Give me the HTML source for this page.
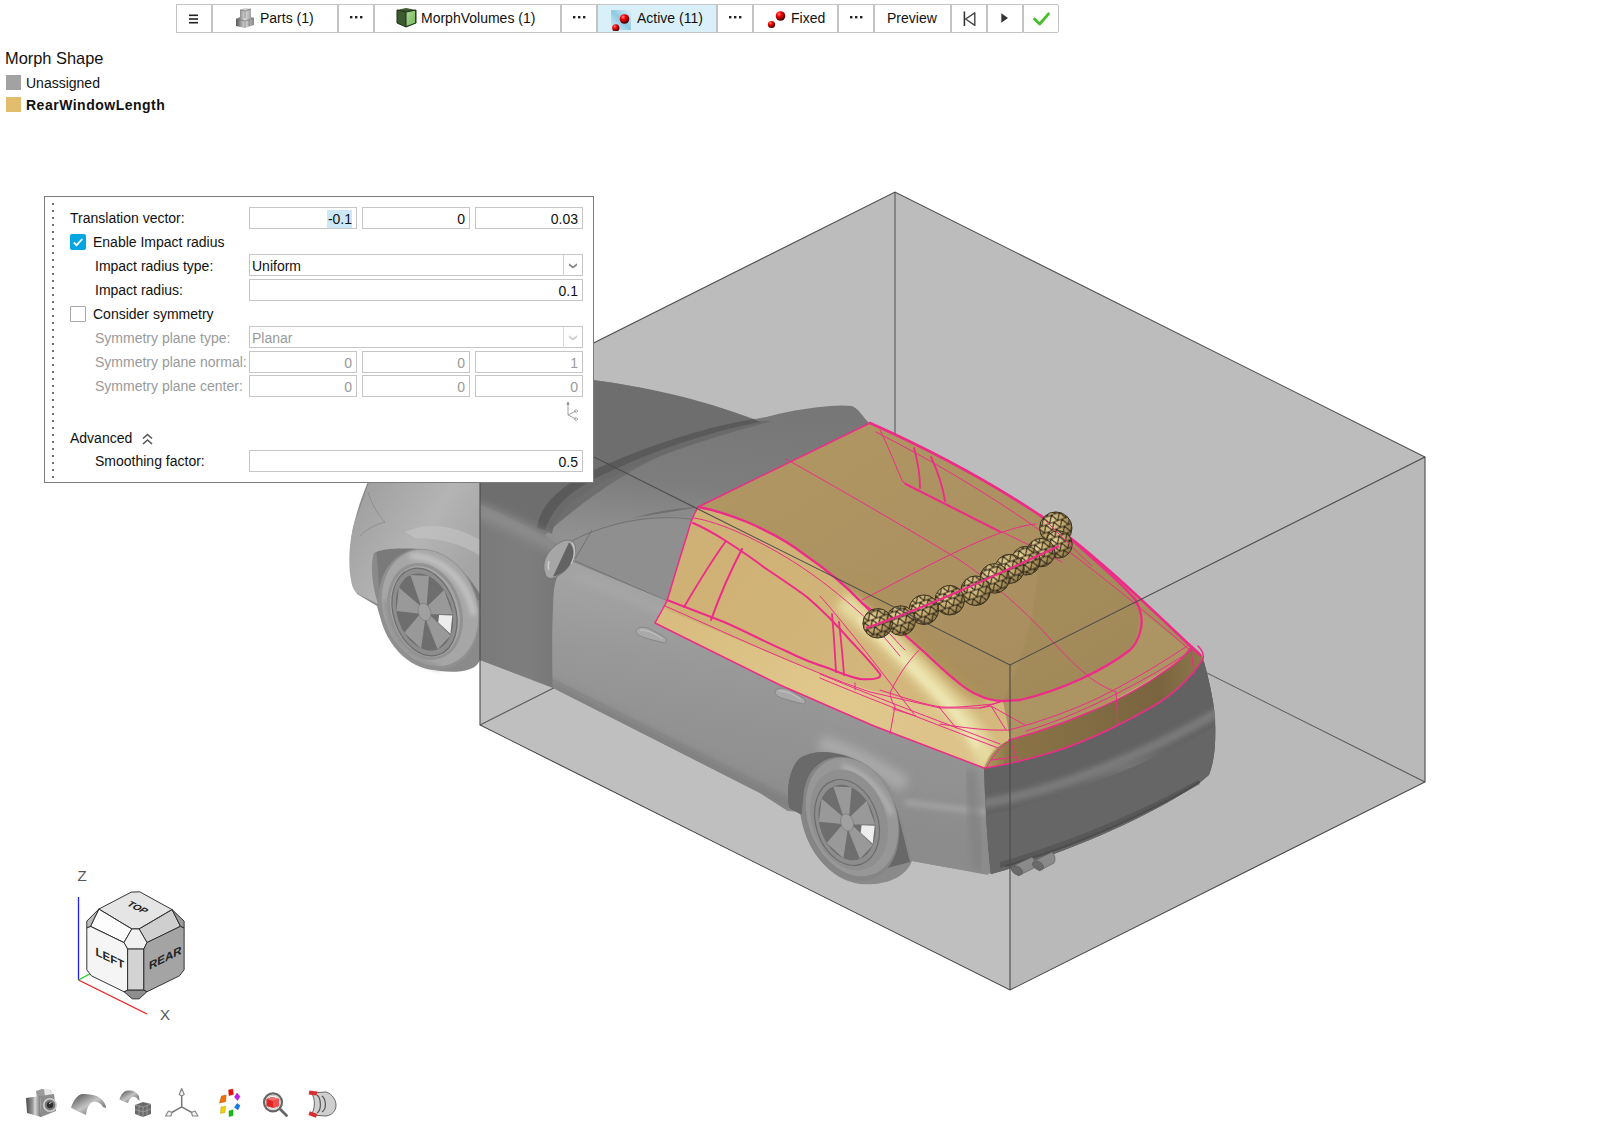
<!DOCTYPE html>
<html><head><meta charset="utf-8">
<style>
*{box-sizing:border-box}
html,body{margin:0;padding:0;background:#fff;width:1618px;height:1147px;overflow:hidden;font-family:"Liberation Sans",sans-serif;color:#000}
.abs{position:absolute}
#tb{position:absolute;left:176px;top:4px;height:29px;display:flex}
#tb .b{height:29px;border:1px solid #c4c4c4;margin-right:0;background:#fff;display:flex;align-items:center;justify-content:center;font-size:14px;color:#111;position:relative}
.dots{font-size:14px;font-weight:bold;letter-spacing:1px}
#dlg{position:absolute;left:44px;top:196px;width:550px;height:287px;background:#fff;border:1px solid #7c7c7c}
.lbl{position:absolute;font-size:14px;color:#111;white-space:nowrap}
.dis{color:#9a9a9a}
.fld{position:absolute;height:22px;border:1px solid #c6c6c6;background:#fff;font-size:14px;text-align:right;padding-right:4px;line-height:22px;color:#111}
.fld.dis{color:#9a9a9a}
</style></head><body>

<svg class="abs" style="left:0;top:0" width="1618" height="1147" id="scene">
<defs>
  <linearGradient id="gFender" x1="0" y1="0" x2="1" y2="0.6">
    <stop offset="0" stop-color="#9c9c9c"/><stop offset="0.6" stop-color="#b4b4b4"/><stop offset="1" stop-color="#a4a4a4"/>
  </linearGradient>
  <linearGradient id="gFenderIn" x1="0" y1="0" x2="1" y2="0">
    <stop offset="0" stop-color="#7a7a7a"/><stop offset="0.5" stop-color="#7e7e7e"/><stop offset="1" stop-color="#737373"/>
  </linearGradient>
  <linearGradient id="gDoor" gradientUnits="userSpaceOnUse" x1="720" y1="600" x2="690" y2="800">
    <stop offset="0" stop-color="#a3a3a3"/><stop offset="0.35" stop-color="#989898"/><stop offset="1" stop-color="#8c8c8c"/>
  </linearGradient>
  <linearGradient id="gRoofGold" x1="0" y1="0" x2="1" y2="1">
    <stop offset="0" stop-color="#b09762"/><stop offset="0.6" stop-color="#aa9060"/><stop offset="1" stop-color="#a48a58"/>
  </linearGradient>
  <linearGradient id="gSideGold" x1="0" y1="0" x2="1" y2="0.5">
    <stop offset="0" stop-color="#cdae72"/><stop offset="1" stop-color="#d6bb80"/>
  </linearGradient>
  <linearGradient id="gBelt" x1="0" y1="0" x2="1" y2="0.4">
    <stop offset="0" stop-color="#d8bb7e"/><stop offset="0.7" stop-color="#e0c88c"/><stop offset="1" stop-color="#ddc38a"/>
  </linearGradient>
  <linearGradient id="gBumper" x1="0" y1="0" x2="0" y2="1">
    <stop offset="0" stop-color="#5c5c5c"/><stop offset="0.42" stop-color="#646464"/><stop offset="0.5" stop-color="#747474"/><stop offset="0.58" stop-color="#686868"/><stop offset="1" stop-color="#555"/>
  </linearGradient>
  <linearGradient id="gRearPanel" x1="0" y1="0" x2="1" y2="0">
    <stop offset="0" stop-color="#b09a62"/><stop offset="0.12" stop-color="#8a7446"/><stop offset="0.8" stop-color="#7a6440"/><stop offset="1" stop-color="#8e784c"/>
  </linearGradient>
  <linearGradient id="gQuarter" gradientUnits="userSpaceOnUse" x1="720" y1="600" x2="690" y2="800">
    <stop offset="0" stop-color="#a3a3a3"/><stop offset="0.35" stop-color="#989898"/><stop offset="1" stop-color="#8c8c8c"/>
  </linearGradient>
  <linearGradient id="gHiStreak" x1="0" y1="0" x2="1" y2="0">
    <stop offset="0" stop-color="#d8bf80" stop-opacity="0"/><stop offset="0.5" stop-color="#ebe0a8"/><stop offset="1" stop-color="#d8bf80" stop-opacity="0"/>
  </linearGradient>
  <radialGradient id="gSph" cx="0.35" cy="0.35" r="0.7">
    <stop offset="0" stop-color="#ecd89e"/><stop offset="0.55" stop-color="#c0a66c"/><stop offset="1" stop-color="#8c7548"/>
  </radialGradient>
  <pattern id="mesh" width="8.5" height="7.4" patternUnits="userSpaceOnUse" patternTransform="rotate(-20)">
    <path d="M0,0 L8.5,0 M0,7.4 L8.5,7.4 M0,7.4 L4.25,0 L8.5,7.4" stroke="#342b1a" stroke-width="1.15" fill="none"/>
  </pattern>
  <linearGradient id="gHiStreak2" x1="0" y1="1" x2="1" y2="0">
    <stop offset="0" stop-color="#d6bb7c" stop-opacity="0"/><stop offset="0.45" stop-color="#e6d9a0"/><stop offset="0.6" stop-color="#e9dfa8"/><stop offset="1" stop-color="#c4a86c" stop-opacity="0.2"/>
  </linearGradient>
  <filter id="blur5" x="-50%" y="-50%" width="200%" height="200%"><feGaussianBlur stdDeviation="5"/></filter>
  <filter id="blur4" x="-50%" y="-50%" width="200%" height="200%"><feGaussianBlur stdDeviation="4"/></filter>
  <filter id="blur2" x="-50%" y="-50%" width="200%" height="200%"><feGaussianBlur stdDeviation="2.5"/></filter>
  <linearGradient id="gRoofGray" x1="0.6" y1="0" x2="0.4" y2="1">
    <stop offset="0" stop-color="#777"/><stop offset="0.55" stop-color="#7d7d7d"/><stop offset="1" stop-color="#939393"/>
  </linearGradient>
</defs>
  <!-- box faces -->
  <polygon points="480,400 895,192 1425,457 1425,782 1010,990 480,725" fill="#bcbcbc"/>
  <polygon points="480,400 1010,665 1010,990 480,725" fill="#bfbfbf"/>
  <polygon points="1010,665 1425,457 1425,782 1010,990" fill="#b9b9b9"/>
  <g stroke="#5a5a5a" stroke-width="1.1" fill="none">
    <polyline points="480,725 895,517 1425,782"/>
    <line x1="895" y1="192" x2="895" y2="517"/>
  </g>

  <g id="car">
    <!-- base silhouette -->
    <path fill="#8a8a8a" d="M593,380 C640,386 700,400 754,419 L778,415 C800,410 830,405 855,409 L869,423
      C930,450 1000,485 1041,516 C1090,552 1140,600 1200,655 L1204,662 C1212,690 1216,716 1215,745 C1214,765 1208,778 1198,784
      C1140,822 1060,855 991,874 L945,867 L912,861 C905,880 880,886 860,884 C830,880 805,850 800,812 L788,811 L760,793 L554,688 L480,660
      C476,672 455,673 440,671 C410,665 385,640 377,606 L357,594 C349,575 348,545 355,520 C360,500 366,488 372,470 L593,470 Z"/>
    <path fill="#7a7a7a" d="M376,545 C386,539 400,537 414,538 C440,540 470,555 480,575 L480,600 L380,600 Z"/>
    <!-- hood / windshield dark (top-left) -->
    <path fill="#6e6e6e" d="M369,482 L593,380 C640,386 700,398 755,420 L700,507 L620,520 L560,545 C530,530 505,515 480,505 L400,500 Z"/>
    <!-- roof gray band -->
    <path fill="url(#gRoofGray)" d="M545,535 C610,475 690,436 755,420 L778,414 C805,408 835,404 852,406 C860,410 862,416 869,423 L700,507 C670,508 630,515 590,535 L560,550 Z"/>
    <!-- crescent dark -->
    <path fill="#6a6a6a" d="M540,529 C546,505 565,486 600,472 C650,450 700,432 756,421 L772,421 C700,440 650,458 610,478 C575,496 556,512 552,534 Z"/>
    <path fill="#5a5a5a" d="M537,528 C540,505 560,485 598,468 C648,446 700,428 754,419 L760,422 C700,434 652,452 604,474 C570,490 552,508 545,530 Z"/>
    <!-- side window front -->
    <path fill="#8f8f8f" d="M566,544 C600,525 650,512 700,518 L690,540 L667,601 L570,561 Z"/>
    <path fill="none" stroke="#6a6a6a" stroke-width="0.8" d="M566,544 C600,525 650,512 697,520 M592,530 L575,559 M575,561 L667,601"/>

    <!-- front fender inside box (dark) -->
    <path fill="url(#gFenderIn)" d="M480,482 L480,505 C505,515 530,530 560,545 L574,548 L574,561 C562,566 556,575 554,590 C552,620 552,660 553,688 L480,660 Z"/>
    <clipPath id="clipFI"><path d="M480,482 L600,482 L574,548 L574,561 C562,566 556,575 554,590 C552,620 552,660 553,688 L480,660 Z"/></clipPath>
    <g clip-path="url(#clipFI)"><path fill="none" stroke="#8c8c8c" stroke-width="14" filter="url(#blur5)" d="M470,508 C500,518 530,532 565,552"/></g>
    <!-- front fender outside box -->
    <path fill="url(#gFender)" d="M369,482 C366,490 362,504 355,520 C349,540 348,565 351,580 C352,588 355,592 358,594 L378,604 C372,585 370,565 374,553 C380,549 395,548 410,548.5 C436,548 460,561 480,594 L480,482 Z"/>
    <path fill="#c6c6c6" opacity="0.55" d="M405,532 C430,520 460,528 480,540 L480,556 C465,545 440,538 415,538 Z"/>
    <path fill="none" stroke="#8a8a8a" stroke-width="0.8" d="M368,492 C372,505 378,515 385,522 C375,525 365,530 360,536"/>

    <!-- door -->
    <path fill="url(#gDoor)" d="M570,561 L667,601 L655,623 L780,685 L874,726 L984,767 L984,795 L930,861 L912,861 L905,830 C895,790 870,755 830,753 C805,753 790,770 789,790 L788,811 L760,793 L553,688 C552,660 552,620 554,590 C556,575 562,566 570,561 Z"/>
    <!-- sill -->
    <clipPath id="clipDoor"><path d="M570,561 L667,601 L655,623 L780,685 L874,726 L984,767 L984,795 L930,861 L912,861 L905,830 C895,790 870,755 830,753 C805,753 790,770 789,790 L788,811 L760,793 L553,688 C552,660 552,620 554,590 C556,575 562,566 570,561 Z"/></clipPath>
    <g clip-path="url(#clipDoor)">
      <path fill="none" stroke="#7c7c7c" stroke-width="9" filter="url(#blur4)" d="M548,684 L760,790 L800,810"/>
      <path fill="none" stroke="#a8a8a8" stroke-width="6" filter="url(#blur4)" d="M575,575 C620,592 660,608 700,630 C760,660 820,690 880,712"/>
    </g>
    <path fill="none" stroke="#858585" stroke-width="1.2" opacity="0.7" d="M553,680 L760,783 L789,798"/>
    <!-- door handles -->
    <g fill="#a9a9a9" stroke="#7a7a7a" stroke-width="0.7">
      <path d="M636,631 C637,627 643,626 650,629 L664,637 C667,639 667,643 664,643 L649,639 C642,637 636,635 636,631 Z"/>
      <path d="M775,692 C776,688 782,687 789,690 L803,698 C806,700 806,704 803,704 L788,700 C781,698 775,696 775,692 Z"/>
    </g>
    <path fill="none" stroke="#c4c4c4" stroke-width="1" d="M640,630 C648,630 656,634 662,639 M779,691 C787,691 795,695 801,700"/>
    <!-- rear quarter lower -->
    <path fill="url(#gQuarter)" d="M760,700 L874,726 L984,767 L988,875 L945,867 L912,861 C908,835 901,806 889,786 C876,768 856,755 830,752 L760,752 Z"/>
    <clipPath id="clipQ"><path d="M700,650 L984,767 L988,875 L912,861 C908,835 901,806 889,786 C876,768 856,755 830,752 C810,752 795,765 790,790 L700,745 Z"/></clipPath>
    <g clip-path="url(#clipQ)">
      <path fill="none" stroke="#a9a9a9" stroke-width="16" filter="url(#blur5)" d="M820,742 C850,752 880,768 905,785"/>
      <path fill="none" stroke="#a2a2a2" stroke-width="6" filter="url(#blur2)" d="M905,802 C930,806 960,809 986,812"/>
      <path fill="none" stroke="#808080" stroke-width="8" filter="url(#blur4)" d="M970,770 L978,870"/>
    </g>
    <!-- rear wheel arch dark -->
    <path fill="#686868" d="M789,808 C787,790 788,772 798,760 C808,752 820,752 832,753 C860,755 885,780 897,810 L910,862 L880,870 L800,814 Z"/>

    <!-- rear bumper / rear face -->
    <path fill="url(#gBumper)" d="M984,768 C1000,766 1018,762 1050,753 C1080,744 1115,728 1150,708 C1170,697 1188,682 1203,659 L1204,662 C1209,680 1213,698 1215,716 C1216,740 1215,760 1209,775 L1198,784 C1140,822 1060,855 991,874 C987,840 985,800 984,768 Z"/>
    <clipPath id="clipB"><path d="M984,768 C1000,766 1018,762 1050,753 C1080,744 1115,728 1150,708 C1170,697 1188,682 1203,659 L1204,662 C1209,680 1213,698 1215,716 C1216,740 1215,760 1209,775 L1198,784 C1140,822 1060,855 991,874 C987,840 985,800 984,768 Z"/></clipPath>
    <g clip-path="url(#clipB)">
      <path fill="#626262" d="M980,760 C1060,740 1150,700 1220,650 L1220,708 C1150,748 1060,790 980,800 Z"/>
      <path fill="none" stroke="#7a7a7a" stroke-width="9" filter="url(#blur2)" d="M982,804 C1060,790 1150,752 1222,710"/>
      <path fill="#666" d="M982,816 C1060,800 1150,764 1222,722 L1222,800 L982,900 Z"/>
      <path fill="none" stroke="#4c4c4c" stroke-width="2" d="M1005,866 C1080,845 1150,812 1200,782"/>
    </g>
    <path fill="#4f4f4f" d="M1000,862 C1070,842 1140,812 1198,780 L1200,784 C1140,818 1070,850 1000,868 Z" opacity="0.6"/>
    <!-- rear corner (side of bumper) -->
    
    <!-- exhaust -->
    <g stroke="#5a5a5a" stroke-width="0.6">
      <path fill="#8a8a8a" d="M1015,865 L1032,857 C1035,860 1036,864 1034,868 L1018,876 Z"/>
      <ellipse cx="1017" cy="870.5" rx="4" ry="6" transform="rotate(-60 1017 870.5)" fill="#6a6a6a"/>
      <path fill="#8a8a8a" d="M1036,860 L1052,852 C1055,855 1056,859 1054,863 L1039,871 Z"/>
      <ellipse cx="1038" cy="865.5" rx="4" ry="6" transform="rotate(-60 1038 865.5)" fill="#6a6a6a"/>
    </g>

    <!-- front tire -->
    <ellipse cx="429" cy="609.5" rx="49" ry="62" transform="rotate(-20 429 609.5)" fill="#909090"/>
    <ellipse cx="430" cy="608" rx="46.5" ry="59.5" transform="rotate(-20 430 608)" fill="#a6a6a6"/>
    <path fill="none" stroke="#c4c4c4" stroke-width="6" filter="url(#blur2)" d="M410,556 C440,556 466,578 474,615"/>
    <path fill="none" stroke="#8c8c8c" stroke-width="4" filter="url(#blur2)" d="M386,600 C388,635 405,660 440,668"/>
    <ellipse cx="425" cy="611.5" rx="35" ry="48" transform="rotate(-18 425 611.5)" fill="none" stroke="#929292" stroke-width="3"/>
    <ellipse cx="424.5" cy="612" rx="31" ry="45" transform="rotate(-18 424.5 612)" fill="#8d8d8d" stroke="#6c6c6c" stroke-width="1.2"/>
    <ellipse cx="424.5" cy="612" rx="27.3" ry="39.6" transform="rotate(-18 424.5 612)" fill="#6e6e6e"/>
    <path fill="#ededed" d="M439.1,614.9 L452.3,615.5 L450.4,633.8 L438.3,622.6 Z"/>
    <path fill="#999" d="M420.9,606.0 L410.5,575.0 L428.9,576.1 L426.6,606.4 Z"/>
    <path fill="#999" d="M426.9,606.7 L444.0,590.1 L452.8,614.3 L429.7,614.2 Z"/>
    <path fill="#999" d="M429.6,614.7 L450.6,635.4 L437.6,649.3 L425.6,619.0 Z"/>
    <path fill="#999" d="M425.2,619.0 L421.1,648.4 L404.3,632.8 L420.0,614.1 Z"/>
    <path fill="#999" d="M419.8,613.7 L396.4,611.1 L398.9,587.5 L420.6,606.3 Z"/>
    <ellipse cx="424.5" cy="612" rx="6.2" ry="9.0" transform="rotate(-18 424.5 612)" fill="#a0a0a0" stroke="#777" stroke-width="0.6"/>

    <!-- rear tire -->
    <ellipse cx="850" cy="819" rx="47" ry="64" transform="rotate(-20 850 819)" fill="#858585"/>
    <ellipse cx="852" cy="817" rx="44" ry="61" transform="rotate(-20 852 817)" fill="#979797"/>
    <path fill="none" stroke="#b2b2b2" stroke-width="5" filter="url(#blur2)" d="M842,766 C864,772 882,790 892,815"/>
    <ellipse cx="849" cy="820" rx="37" ry="52" transform="rotate(-20 849 820)" fill="#8f8f8f"/>
    <ellipse cx="847" cy="822.5" rx="31" ry="44" transform="rotate(-18 847 822.5)" fill="#8d8d8d" stroke="#6c6c6c" stroke-width="1.2"/>
    <ellipse cx="847" cy="822.5" rx="27.3" ry="38.7" transform="rotate(-18 847 822.5)" fill="#6e6e6e"/>
    <path fill="#ededed" d="M861.6,825.2 L874.7,825.8 L872.7,843.7 L860.7,832.8 Z"/>
    <path fill="#999" d="M843.4,816.7 L833.3,786.4 L851.6,787.3 L849.1,817.0 Z"/>
    <path fill="#999" d="M849.5,817.2 L866.6,800.9 L875.2,824.5 L852.2,824.6 Z"/>
    <path fill="#999" d="M852.1,825.1 L872.8,845.3 L859.9,859.0 L848.1,829.4 Z"/>
    <path fill="#999" d="M847.7,829.4 L843.4,858.2 L826.7,843.0 L842.5,824.6 Z"/>
    <path fill="#999" d="M842.3,824.1 L818.9,821.8 L821.6,798.7 L843.2,816.9 Z"/>
    <ellipse cx="847" cy="822.5" rx="6.2" ry="8.8" transform="rotate(-18 847 822.5)" fill="#a0a0a0" stroke="#777" stroke-width="0.6"/>
    <!-- rear arch crescent left -->
    <path fill="#6a6a6a" d="M789,808 C786,788 790,768 800,758 C810,752 822,751 834,753 C818,758 808,772 804,790 C803,800 802,808 802,814 Z"/>

    <!-- mirror -->
    <path fill="#a6a6a6" stroke="#6c6c6c" stroke-width="0.7" d="M545,573 C541,562 548,548 563,541 C572,538 577,543 575,552 C573,563 566,572 556,577 C550,580 546,578 545,573 Z"/>
    <path fill="#636363" d="M553,576.5 L569,542.5 C574,546 575,556 571,563 C566,571 559,576 553,576.5 Z"/>
    <path fill="none" stroke="#c8c8c8" stroke-width="1.2" d="M572,543 C576,548 575,557 571,564"/>
    <path fill="none" stroke="#d0d0d0" stroke-width="1.5" d="M549,561 C548,565 548,568 549,570"/>
    <!-- GOLD -->
    <!-- whole gold area (side colour) -->
    <path fill="url(#gSideGold)" d="M698,507 L870,423 C935,452 990,482 1041,516 C1090,550 1140,598 1200,655 C1204,655 1204,657 1203,659 C1188,682 1170,697 1150,708 C1115,728 1080,744 1050,753 C1018,762 1000,766 984,768 L874,726 L780,685 L655,623 L667,601 L679,561 L688,532 C690,524 694,514 698,507 Z"/>
    <!-- belt band (lighter) -->
    <path fill="url(#gBelt)" d="M662,608 C720,632 800,668 870,690 L940,708 C960,712 975,735 984,767 L874,726 L780,685 L655,623 Z"/>
    <!-- top: roof + rear window + trunk + deck -->
    <path fill="url(#gRoofGold)" d="M698,507 L870,423 C935,452 990,482 1041,516 C1090,550 1140,598 1200,655 C1196,650 1190,652 1185,655 C1165,671 1130,694 1080,716 C1058,725 1035,733 1010,740 C1008,725 1005,710 1003,701 C995,701 988,700 978,695 C970,692 962,686 954,679 C945,672 935,662 923,651 C914,643 905,635 891,623 C885,620 875,614 862,603 C848,588 830,572 805,555 C790,543 770,532 747,522 C730,515 715,510 698,507 Z"/>
    <!-- deck slightly lighter -->
    <path fill="#b29b69" opacity="0.55" d="M1003,701 L1020,700 C1063,690 1104,670 1130,650 C1142,638 1143,622 1141,612 C1165,630 1185,645 1200,655 C1196,650 1190,652 1185,655 C1165,671 1130,694 1080,716 C1058,725 1035,733 1010,740 C1008,725 1005,710 1003,701 Z"/>
    <!-- darker trunk interior toward right -->
    <path fill="#9c8352" opacity="0.35" d="M1040,515 C1080,545 1120,580 1132,596 C1140,605 1143,625 1130,650 C1104,670 1063,690 1020,700 L1003,701 C1030,640 1040,600 1040,515 Z"/>
    <!-- C pillar highlight -->
    <clipPath id="clipSide"><path d="M698,507 L870,423 L1010,736 C997,742 988,755 984,767 L874,726 L780,685 L655,623 Z"/></clipPath>
    <g clip-path="url(#clipSide)">
      <path fill="none" stroke="#b09458" stroke-width="14" opacity="0.6" filter="url(#blur4)" d="M858,585 C880,605 905,630 930,655 C950,675 965,690 985,700"/>
      <path fill="none" stroke="#e6dba2" stroke-width="20" filter="url(#blur5)" d="M842,600 C855,612 872,626 890,643 C912,664 935,688 955,710 C970,726 982,742 990,765"/>
      <path fill="none" stroke="#eee6b4" stroke-width="7" filter="url(#blur2)" d="M860,618 C880,636 900,655 922,677 C944,699 964,720 978,748"/>
    </g>
    <!-- rear panel (vertical) -->
    <path fill="url(#gRearPanel)" d="M984,768 C990,755 998,744 1010,740 C1035,733 1058,725 1080,716 C1105,706 1130,694 1150,681 C1165,671 1178,663 1185,655 L1192,646 C1198,650 1203,655 1203,659 C1188,682 1170,697 1150,708 C1115,728 1080,744 1050,753 C1018,762 1000,766 984,768 Z"/>
  </g>

  <!-- pink lines -->
  <g fill="none" stroke="#ee2b88" stroke-linejoin="round" stroke-linecap="round">
    <!-- outer boundary -->
    <path stroke-width="1.5" d="M698,507 L870,423"/>
    <path stroke-width="2.6" d="M870,423 C935,452 990,482 1041,516 C1090,550 1140,598 1200,655"/>
    <path stroke-width="1" d="M876,432 C935,462 995,498 1045,534 C1095,570 1150,615 1192,652"/>
    <path stroke-width="1.5" d="M698,507 C694,514 690,524 688,532 L679,561 L667,601 L655,623 L780,685 L874,726 L984,768 C1000,766 1018,762 1050,753 C1080,744 1115,728 1150,708 C1170,697 1188,682 1203,659 C1204,655 1202,650 1198,646"/>
    <!-- roof rail -->
    <path stroke-width="2.3" d="M698,507 C715,510 730,515 747,522 C770,532 790,543 805,555 C830,572 848,588 862,603 C875,614 885,620 891,623 C905,635 914,643 923,651 C935,662 945,672 954,679 C962,686 970,692 978,695 C988,700 995,701 1003,701 L1020,700 C1063,690 1104,670 1130,650 C1140,640 1143,625 1141,615 C1139,605 1135,598 1132,596 C1120,582 1100,565 1074,542 C1060,530 1050,522 1040,515"/>
    <path stroke-width="1" d="M694,518 C720,522 760,540 800,566 C830,586 850,604 868,620 C880,632 890,644 900,656"/>
    <!-- window top + quarter window -->
    <path stroke-width="2" d="M693,523 C705,528 715,534 726,541 C740,550 752,558 765,568 C780,578 795,588 807,597 C822,610 836,624 849,639 C860,651 872,663 880,674 C882,678 875,680 860,679"/>
    <!-- window lower edge -->
    <path stroke-width="2" d="M667,600 C690,609 708,616 724,622 C745,631 765,642 786,651 C800,658 815,664 828,668 C840,673 850,677 860,679"/>
    <path stroke-width="1" d="M665,606 C720,630 800,668 870,692 L940,708"/>
    <path stroke-width="1" d="M820,674 C870,695 930,718 1000,744 M820,678 C870,699 930,722 998,748"/>
    <!-- B pillars -->
    <path stroke-width="1.8" d="M726,541 C712,560 697,585 684,607"/>
    <path stroke-width="2" d="M742,549 C732,568 720,595 711,620"/>
    <!-- quarter window verticals -->
    <path stroke-width="1.8" d="M832,614 C834,635 835,655 836,672 M839,622 C841,640 843,660 844,675"/>
    <!-- C pillar lines -->
    <path stroke-width="1" d="M919,650 C905,665 897,678 890,693 C891,700 893,704 895,706 L890,734"/>
    <path stroke-width="1" d="M820,596 C850,630 880,670 914,714"/>
    <path stroke-width="1" d="M838,580 C870,610 890,635 905,650"/>
    <path stroke-width="1" d="M855,683 L855,690 M893,709 L916,716 M939,707 L956,728"/>
    <path stroke-width="1" d="M880,690 C905,698 925,705 942,707 C960,708 980,705 994,704 L1003,701"/>
    <!-- rear deck lines -->
    <path stroke-width="1" d="M940,708 L980,708 C988,706 995,703 1003,701"/>
    <path stroke-width="1" d="M980,708 L991,706 L1025,725 M991,706 L1006,730"/>
    <path stroke-width="1" d="M940,724 C960,727 985,731 1009,730 C1040,722 1080,708 1110,692 C1140,676 1165,661 1190,644"/>
    <path stroke-width="1" d="M1026,731 C1050,724 1080,712 1110,697 C1140,682 1165,668 1192,650"/>
    <path stroke-width="1.4" d="M1009,740 C1035,733 1058,725 1080,716 C1105,706 1130,694 1150,681 C1165,671 1178,663 1185,655 L1192,646"/>
    <path stroke-width="1" d="M1010,740 L1018,762 M1116,692 L1118,724 M1191,648 L1194,674"/>
    <path stroke-width="1" d="M991,760 L1015,757 M1005,759 L1006,765"/>
    <path stroke-width="1" d="M987,767 C992,757 1000,747 1010,740"/>
    <path stroke-width="1" d="M1051,640 C1065,655 1078,668 1088,676 C1098,684 1106,688 1116,692"/>
    <!-- top roof lines -->
    <path stroke-width="1" d="M786,459 C850,495 920,536 958,559 C990,580 1030,615 1051,640"/>
    <path stroke-width="1" d="M862,600 C920,570 960,548 1000,533 C1015,528 1025,525 1036,524"/>
    <path stroke-width="1" d="M880,430 C890,450 897,470 903,482 L1000,531 C1030,545 1050,556 1062,562"/>
    <path stroke-width="1.8" d="M914,448 C918,462 920,475 920,488 M931,457 C938,472 943,488 945,501"/>
    <path stroke-width="1.5" d="M905,484 L1000,532"/>
  </g>

  <!-- spheres -->
  <g id="spheres">
<circle cx="1055.8" cy="528.1" r="16.2" fill="url(#gSph)"/>
<circle cx="1055.8" cy="528.1" r="16.2" fill="url(#mesh)" stroke="#3b3220" stroke-width="1"/>
<circle cx="1058.5" cy="544.4" r="13.7" fill="url(#gSph)"/>
<circle cx="1058.5" cy="544.4" r="13.7" fill="url(#mesh)" stroke="#3b3220" stroke-width="1"/>
<circle cx="1040.8" cy="552.6" r="14.2" fill="url(#gSph)"/>
<circle cx="1040.8" cy="552.6" r="14.2" fill="url(#mesh)" stroke="#3b3220" stroke-width="1"/>
<circle cx="1025.9" cy="560.7" r="14.4" fill="url(#gSph)"/>
<circle cx="1025.9" cy="560.7" r="14.4" fill="url(#mesh)" stroke="#3b3220" stroke-width="1"/>
<circle cx="1009.6" cy="568.9" r="14.6" fill="url(#gSph)"/>
<circle cx="1009.6" cy="568.9" r="14.6" fill="url(#mesh)" stroke="#3b3220" stroke-width="1"/>
<circle cx="994.6" cy="578.4" r="14.8" fill="url(#gSph)"/>
<circle cx="994.6" cy="578.4" r="14.8" fill="url(#mesh)" stroke="#3b3220" stroke-width="1"/>
<circle cx="975.6" cy="590.7" r="14.8" fill="url(#gSph)"/>
<circle cx="975.6" cy="590.7" r="14.8" fill="url(#mesh)" stroke="#3b3220" stroke-width="1"/>
<circle cx="949.7" cy="600.2" r="14.8" fill="url(#gSph)"/>
<circle cx="949.7" cy="600.2" r="14.8" fill="url(#mesh)" stroke="#3b3220" stroke-width="1"/>
<circle cx="923.9" cy="609.7" r="14.8" fill="url(#gSph)"/>
<circle cx="923.9" cy="609.7" r="14.8" fill="url(#mesh)" stroke="#3b3220" stroke-width="1"/>
<circle cx="900.8" cy="620.6" r="14.8" fill="url(#gSph)"/>
<circle cx="900.8" cy="620.6" r="14.8" fill="url(#mesh)" stroke="#3b3220" stroke-width="1"/>
<circle cx="877.7" cy="623.3" r="14.8" fill="url(#gSph)"/>
<circle cx="877.7" cy="623.3" r="14.8" fill="url(#mesh)" stroke="#3b3220" stroke-width="1"/>
  </g>
  <path stroke="#ee2b88" stroke-width="2" fill="none" d="M866,628 C920,610 990,578 1059,546"/>
  <path stroke="#ee2b88" stroke-width="1" fill="none" d="M1045,520 C1065,540 1080,555 1092,566"/>

  <g stroke="#4a4a4a" stroke-width="1.1" fill="none">
    <polyline points="480,400 895,192 1425,457 1425,782 1010,990 480,725 480,400"/>
    <polyline points="480,400 1010,665 1425,457"/>
    <line x1="1010" y1="665" x2="1010" y2="990"/>
  </g>
</svg>


<!-- toolbar -->
<div id="tb">
  <div class="b" style="width:36px"><svg width="10" height="10" style="position:absolute;left:12px;top:9px"><rect x="0" y="0.5" width="9" height="1.6" fill="#222"/><rect x="0" y="4.2" width="9" height="1.6" fill="#222"/><rect x="0" y="7.9" width="9" height="1.6" fill="#222"/></svg></div>
  <div class="b" style="width:126px"><svg width="20" height="21" style="position:absolute;left:23px;top:3px">
    <defs><linearGradient id="cg" x1="0" y1="0" x2="1" y2="0"><stop offset="0" stop-color="#555"/><stop offset="0.5" stop-color="#d8d8d8"/><stop offset="1" stop-color="#888"/></linearGradient></defs>
    <path d="M4,2 L9,0 L15,1 L15,9 L18,10 L18,17 L9,20 L0,18 L0,11 L4,9 Z" fill="url(#cg)"/>
    <path d="M4,2 L9,3 L15,1 M9,3 L9,10 M0,11 L9,13 L18,10 M9,13 L9,20 M13,12 L13,18" stroke="#777" stroke-width="0.7" fill="none"/>
  </svg><span style="position:absolute;left:47px;top:5px">Parts (1)</span></div>
  <div class="b" style="width:36px"><svg width="14" height="4" style="position:absolute;left:11px;top:11px"><rect x="0" y="0" width="2.4" height="2.4" fill="#222"/><rect x="5" y="0" width="2.4" height="2.4" fill="#222"/><rect x="10" y="0" width="2.4" height="2.4" fill="#222"/></svg></div>
  <div class="b" style="width:187px"><svg width="22" height="21" style="position:absolute;left:21px;top:3px">
    <defs><linearGradient id="gg" x1="0" y1="0" x2="1" y2="1"><stop offset="0" stop-color="#a8d890"/><stop offset="1" stop-color="#78b860"/></linearGradient></defs>
    <path d="M1,2 L10,0 L20,2 L20,15 L10,19 L1,15 Z" fill="#3b5a30"/>
    <path d="M10,4 L19,2.5 L19,15 L10,18 Z" fill="url(#gg)"/>
    <path d="M1,2 L10,4 L20,2 M10,4 L10,19 M1,2 L1,15 L10,19 L20,15 L20,2" stroke="#1f2f1a" stroke-width="1" fill="none"/>
  </svg><span style="position:absolute;left:46px;top:5px">MorphVolumes (1)</span></div>
  <div class="b" style="width:36px"><svg width="14" height="4" style="position:absolute;left:11px;top:11px"><rect x="0" y="0" width="2.4" height="2.4" fill="#222"/><rect x="5" y="0" width="2.4" height="2.4" fill="#222"/><rect x="10" y="0" width="2.4" height="2.4" fill="#222"/></svg></div>
  <div class="b" style="width:120px;background:#d9f0fa"><svg width="22" height="22" style="position:absolute;left:13px;top:4px">
    <defs><radialGradient id="rb" cx="0.35" cy="0.3" r="0.7"><stop offset="0" stop-color="#ff9090"/><stop offset="0.35" stop-color="#f00"/><stop offset="1" stop-color="#400"/></radialGradient>
    <linearGradient id="bb" x1="1" y1="0" x2="0" y2="1"><stop offset="0" stop-color="#d9f0fa"/><stop offset="0.5" stop-color="#7cc0dc"/><stop offset="1" stop-color="#d9f0fa"/></linearGradient></defs>
    <rect x="0" y="1" width="20" height="20" fill="url(#bb)" opacity="0.8"/>
    <circle cx="13.5" cy="10" r="4.8" fill="url(#rb)"/><circle cx="4.8" cy="18.9" r="3.6" fill="url(#rb)"/>
  </svg><span style="position:absolute;left:39px;top:5px">Active (11)</span></div>
  <div class="b" style="width:36px"><svg width="14" height="4" style="position:absolute;left:11px;top:11px"><rect x="0" y="0" width="2.4" height="2.4" fill="#222"/><rect x="5" y="0" width="2.4" height="2.4" fill="#222"/><rect x="10" y="0" width="2.4" height="2.4" fill="#222"/></svg></div>
  <div class="b" style="width:85px"><svg width="22" height="22" style="position:absolute;left:12px;top:3px">
    <circle cx="14.5" cy="8" r="4.8" fill="url(#rb)"/><circle cx="5.5" cy="16.5" r="3.6" fill="url(#rb)"/>
  </svg><span style="position:absolute;left:37px;top:5px">Fixed</span></div>
  <div class="b" style="width:36px"><svg width="14" height="4" style="position:absolute;left:11px;top:11px"><rect x="0" y="0" width="2.4" height="2.4" fill="#222"/><rect x="5" y="0" width="2.4" height="2.4" fill="#222"/><rect x="10" y="0" width="2.4" height="2.4" fill="#222"/></svg></div>
  <div class="b" style="width:77px"><span style="position:absolute;left:12px;top:5px">Preview</span></div>
  <div class="b" style="width:36px"><svg width="16" height="18" style="position:absolute;left:10px;top:5px">
    <line x1="2.4" y1="1.5" x2="2.4" y2="16" stroke="#333" stroke-width="1.6"/>
    <path d="M3.6,9 L12.8,2.8 L12.8,15.4 Z" fill="none" stroke="#444" stroke-width="1.4" stroke-linejoin="round"/>
  </svg></div>
  <div class="b" style="width:36px"><svg width="12" height="12" style="position:absolute;left:12px;top:7px"><path d="M1.3,1.2 L8,6 L1.3,10.7 Z" fill="#333"/></svg></div>
  <div class="b" style="width:36px;border-radius:0 2px 2px 0"><svg width="20" height="16" style="position:absolute;left:8px;top:5px"><path d="M2.5,9 L7.7,14 L16.5,3.8" fill="none" stroke="#45c02a" stroke-width="2.8" stroke-linecap="round" stroke-linejoin="round"/></svg></div>
</div>

<!-- legend -->
<div class="lbl" style="left:5px;top:49px;font-size:16.4px">Morph Shape</div>
<div class="abs" style="left:6px;top:75px;width:15px;height:15px;background:#a2a2a2"></div>
<div class="lbl" style="left:26px;top:75px">Unassigned</div>
<div class="abs" style="left:6px;top:97px;width:15px;height:15px;background:#e2bd6d"></div>
<div class="lbl" style="left:26px;top:97px;font-weight:bold;letter-spacing:0.5px">RearWindowLength</div>

<!-- dialog -->
<div id="dlg">
  <svg width="3" height="278" style="position:absolute;left:7px;top:5px">
    <pattern id="dp" width="3" height="7" patternUnits="userSpaceOnUse"><rect x="0" y="1" width="2" height="2" fill="#707070"/></pattern>
    <rect width="3" height="278" fill="url(#dp)"/>
  </svg>
</div>
<div class="lbl" style="left:70px;top:210px">Translation vector:</div>
<div class="fld" style="left:249px;top:207px;width:108px"><span style="background:#cce8f7;padding:1px 0 1px 1px">-0.1</span></div>
<div class="fld" style="left:362px;top:207px;width:108px">0</div>
<div class="fld" style="left:475px;top:207px;width:108px">0.03</div>

<div class="abs" style="left:70px;top:234px;width:16px;height:16px;background:#03a6e2;border-radius:2px"><svg width="16" height="16"><path d="M3.8,8.5 L6.6,11.2 L12.3,5" fill="none" stroke="#fff" stroke-width="1.8"/></svg></div>
<div class="lbl" style="left:93px;top:234px">Enable Impact radius</div>

<div class="lbl" style="left:95px;top:258px">Impact radius type:</div>
<div class="fld" style="left:249px;top:254px;width:334px;text-align:left;padding-left:2px">Uniform</div>
<div class="abs" style="left:563px;top:255px;width:19px;height:21px;border-left:1px solid #d0d0d0"><svg width="18" height="20"><path d="M5,8.2 L9,11.2 L13,8.2 L13,10.6 L9,13.6 L5,10.6 Z" fill="#858585"/></svg></div>

<div class="lbl" style="left:95px;top:282px">Impact radius:</div>
<div class="fld" style="left:249px;top:279px;width:334px">0.1</div>

<div class="abs" style="left:70px;top:306px;width:16px;height:16px;border:1px solid #a8a8a8;background:#fff;border-radius:1px"></div>
<div class="lbl" style="left:93px;top:306px">Consider symmetry</div>

<div class="lbl dis" style="left:95px;top:330px">Symmetry plane type:</div>
<div class="fld dis" style="left:249px;top:326px;width:334px;text-align:left;padding-left:2px">Planar</div>
<div class="abs" style="left:563px;top:327px;width:19px;height:21px;border-left:1px solid #d8d8d8"><svg width="18" height="20"><path d="M5,8.2 L9,11.2 L13,8.2 L13,10.6 L9,13.6 L5,10.6 Z" fill="#cdcdcd"/></svg></div>

<div class="lbl dis" style="left:95px;top:354px">Symmetry plane normal:</div>
<div class="fld dis" style="left:249px;top:351px;width:108px">0</div>
<div class="fld dis" style="left:362px;top:351px;width:108px">0</div>
<div class="fld dis" style="left:475px;top:351px;width:108px">1</div>

<div class="lbl dis" style="left:95px;top:378px">Symmetry plane center:</div>
<div class="fld dis" style="left:249px;top:375px;width:108px">0</div>
<div class="fld dis" style="left:362px;top:375px;width:108px">0</div>
<div class="fld dis" style="left:475px;top:375px;width:108px">0</div>

<svg class="abs" style="left:564px;top:400px" width="18" height="22">
  <path d="M4,2 L4,15 L12,19 M4,15 L12,11" fill="none" stroke="#a0a0a0" stroke-width="1"/>
  <path d="M4,1 L2.5,5 L5.5,5 Z" fill="#909090"/>
  <path d="M12,9.5 L14,11 L12,12.5 L10,11 Z M12,17.5 L14,19 L12,20.5 L10,19 Z" fill="none" stroke="#a0a0a0" stroke-width="0.9"/>
</svg>

<div class="lbl" style="left:70px;top:430px">Advanced</div>
<svg class="abs" style="left:141px;top:432px" width="14" height="14">
  <path d="M2,6.5 L6.5,2.5 L11,6.5 M2,12 L6.5,8 L11,12" fill="none" stroke="#555" stroke-width="1.6"/>
</svg>
<div class="lbl" style="left:95px;top:453px">Smoothing factor:</div>
<div class="fld" style="left:249px;top:450px;width:334px">0.5</div>


<!-- view cube -->
<svg class="abs" style="left:60px;top:860px" width="140" height="170">
  <line x1="18.5" y1="37" x2="18.5" y2="120" stroke="#1f1fff" stroke-width="1.3"/>
  <line x1="18.5" y1="120" x2="87" y2="154" stroke="#f01818" stroke-width="1.3"/>
  <line x1="18.5" y1="120" x2="29.6" y2="114" stroke="#18d018" stroke-width="1.3"/>
  <text x="17.5" y="20.5" font-family="Liberation Sans" font-size="15" fill="#555">Z</text>
  <text x="100" y="160" font-family="Liberation Sans" font-size="15" fill="#555">X</text>
  <g transform="translate(20,25) scale(0.10466)" stroke="#2a2a2a" stroke-width="9" stroke-linejoin="round">
    <path fill="#e5e5e5" d="M180,230 L490,68 L570,65 L880,235 L565,420 L495,420 Z"/>
    <path fill="#fdfdfd" d="M180,230 L495,420 L420,550 L100,395 Z"/>
    <path fill="#cfcfcf" d="M880,235 L565,420 L640,550 L960,395 Z"/>
    <path fill="#f1f1f1" d="M495,420 L565,420 L640,550 L610,612 L455,612 L420,550 Z"/>
    <path fill="#f5f5f5" d="M65,410 L100,395 L420,550 L455,612 L455,1010 L420,1020 L110,868 L65,810 Z"/>
    <path fill="#d3d3d3" d="M455,612 L610,612 L610,1005 L455,1005 Z"/>
    <path fill="#a4a4a4" d="M640,550 L960,395 L995,410 L995,810 L950,868 L640,1020 L610,1005 L610,612 Z"/>
    <path fill="#bdbdbd" d="M65,345 L180,230 L100,395 L65,410 Z"/>
    <path fill="#9a9a9a" d="M880,235 L995,345 L995,410 L960,395 Z"/>
    <path fill="#8e8e8e" d="M420,1020 L455,1005 L610,1005 L640,1020 L565,1088 L500,1088 Z"/>
    <path fill="none" stroke-width="5" stroke-dasharray="14 8" d="M180,230 L495,420 M100,395 L420,550 M880,235 L565,420"/>
  </g>
  <g font-family="Liberation Sans" font-weight="bold" fill="#222">
    <text x="0" y="0" font-size="10" transform="matrix(0.894,0.447,-0.75,0.6,66,45)">TOP</text>
    <text x="0" y="0" font-size="11.5" transform="matrix(1,0.5,0,1,35.5,95)">LEFT</text>
    <text x="0" y="0" font-size="11.5" transform="matrix(1,-0.5,0,1,89,110)">REAR</text>
  </g>
</svg>

<!-- bottom icons -->
<svg class="abs" style="left:20px;top:1084px" width="330" height="40">
  <defs>
    <linearGradient id="ic1" x1="0" y1="0" x2="1" y2="0"><stop offset="0" stop-color="#4a4a4a"/><stop offset="0.45" stop-color="#9a9a9a"/><stop offset="0.6" stop-color="#d8d8d8"/><stop offset="1" stop-color="#6a6a6a"/></linearGradient>
    <linearGradient id="ic2" x1="0" y1="0" x2="1" y2="1"><stop offset="0" stop-color="#444"/><stop offset="0.5" stop-color="#c4c4c4"/><stop offset="1" stop-color="#4a4a4a"/></linearGradient>
    <linearGradient id="ic3" x1="0" y1="0" x2="1" y2="0"><stop offset="0" stop-color="#777"/><stop offset="1" stop-color="#bbb"/></linearGradient>
  </defs>
  <!-- camera -->
  <path d="M16,7 L22,5 L31,6 L32,13 L17,14 Z" fill="#9a9a9a"/>
  <path d="M24,5 C28,4 32,6 33,10 L32,14 L25,13 Z" fill="#e8e8e8"/>
  <path d="M6,14 L20,12 L21,33 L7,29 Z" fill="url(#ic1)"/>
  <path d="M20,12 L34,10 L36,27 L21,33 Z" fill="#8c8c8c"/>
  <circle cx="30" cy="21" r="6.2" fill="#777" stroke="#cfcfcf" stroke-width="1.6"/>
  <circle cx="30" cy="21" r="3.2" fill="#2e2e2e"/>
  <path d="M29,19.5 L31.5,18.5" stroke="#ddd" stroke-width="1"/>
  <!-- surface -->
  <path d="M51,23.5 C54,15 58,11 62,10 C70,10 76,11 80,14 C84,17 86,21 86,24 L83,23 C81,19 77,17 73,18 C69,19 67,24 66,31 C61,29 55,26 51,23.5 Z" fill="url(#ic2)"/>
  <!-- surface + cube -->
  <path d="M99.5,15.5 C101,10 104,7 108,6.5 C113,6 117,8 119,12 L119.5,17 C117,13 114,12 112,13 C110,14 109,16 108,19 C105,18 102,17 99.5,15.5 Z" fill="url(#ic2)"/>
  <path d="M115,21 L123,18 L131,20 L131,30 L123,33 L115,30 Z" fill="#6a6a6a"/>
  <path d="M115,21 L123,23 L131,20 M123,23 L123,33 M119,22 L119,31.5 M127,21.5 L127,31.5 M115,25.5 L123,28 L131,25" stroke="#aaa" stroke-width="0.7" fill="none"/>
  <!-- tripod -->
  <g stroke="#888" stroke-width="1.2" fill="#f4f4f4" stroke-linejoin="round">
    <path d="M161.7,9 L161.7,22.9 L149,30 M161.7,22.9 L174.5,30" fill="none" stroke="#777" stroke-width="1.5"/>
    <path d="M161.7,4.5 L159.2,10.5 L161.7,12 L164.2,10.5 Z"/>
    <path d="M145.5,32 L148.5,27 L152,28.5 L151,32 Z"/>
    <path d="M178,32 L175,27 L171.5,28.5 L172.5,32 Z"/>
  </g>
  <!-- colours -->
  <path d="M208.6,6 L212.8,5 L213.4,10.6 L209,11.6 Z" fill="#f01010" stroke="#b00" stroke-width="0.4"/>
  <path d="M217,9 L220,12.5 L217.5,16.5 L214.5,13 Z" fill="#c020f0" stroke="#80a" stroke-width="0.4"/>
  <path d="M217,19.5 L220,21.5 L218,25.8 L214.5,23.5 Z" fill="#1a7af0" stroke="#04a" stroke-width="0.4"/>
  <path d="M209,27 L213,25.8 L213,31.5 L209,32.6 Z" fill="#10c010" stroke="#080" stroke-width="0.4"/>
  <path d="M201,23 L205.5,22.3 L205,28.5 L200.5,29.5 Z" fill="#f0d000" stroke="#a80" stroke-width="0.4"/>
  <path d="M201.5,12 L206.2,11 L205.5,17.8 L199.5,19 Z" fill="#f07000" stroke="#a40" stroke-width="0.4"/>
  <!-- magnifier -->
  <circle cx="253" cy="18.3" r="9" fill="#f2f2f2" stroke="#666" stroke-width="2.2"/>
  <circle cx="253" cy="18.3" r="7" fill="none" stroke="#bbb" stroke-width="0.8"/>
  <path d="M246.5,15 L252,13 L259,15 L259,22 L253,24 L246.5,22 Z" fill="#e02424"/>
  <path d="M246.5,15 L253,17 L259,15 L253,13 Z" fill="#f07070"/>
  <path d="M253,17 L259,15 L259,22 L253,24 Z" fill="#f05050"/>
  <line x1="260.5" y1="25.5" x2="266.5" y2="31.5" stroke="#666" stroke-width="2.8" stroke-linecap="round"/>
  <!-- red part -->
  <path d="M291,9 L306,8 C313,10 316,17 316,21 C316,27 312,31 306,32 L291,31 C295,26 296,14 291,9 Z" fill="#cfcfcf" stroke="#666" stroke-width="1"/>
  <path d="M297,11 C301,14 302,26 297,29 M302,12 C306,15 307,25 302,28" fill="none" stroke="#555" stroke-width="1.2"/>
  <rect x="289" y="7" width="8" height="4" fill="#d83030" transform="rotate(8 293 9)"/>
  <rect x="289" y="28.5" width="8" height="4" fill="#d83030" transform="rotate(20 293 30)"/>
</svg>
</body></html>
